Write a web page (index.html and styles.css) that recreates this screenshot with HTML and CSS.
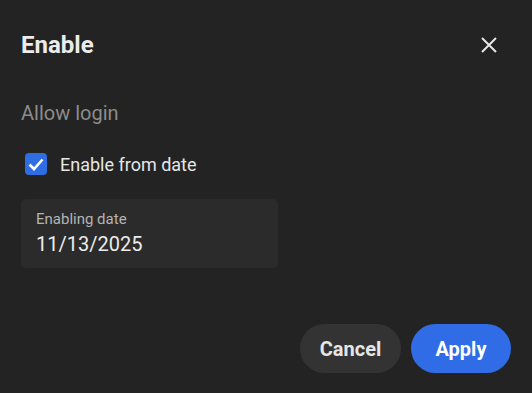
FILE: index.html
```html
<!DOCTYPE html>
<html lang="en">
<head>
    <meta charset="UTF-8">
    <meta name="viewport" content="width=device-width, initial-scale=1.0">
    <title>Enable</title>
    <link rel="stylesheet" href="styles.css">
</head>
<body>
    <div class="dialog">
        <div class="header">
            <h1>Enable</h1>
            <button class="close" aria-label="Close">
                <svg width="16" height="16" viewBox="0 0 16 16"><path d="M1 1 L15 15 M15 1 L1 15" stroke="#e6e6e6" stroke-width="2" fill="none"/></svg>
            </button>
        </div>
        <p class="section">Allow login</p>
        <label class="check">
            <span class="box">
                <svg width="22" height="22" viewBox="0 0 22 22"><path d="M4.5 11.5 L9 16 L17.5 6.5" stroke="#fff" stroke-width="2.6" fill="none"/></svg>
            </span>
            Enable from date
        </label>
        <div class="field">
            <div class="field-label">Enabling date</div>
            <div class="field-value">11/13/2025</div>
        </div>
        <div class="actions">
            <button class="btn cancel">Cancel</button>
            <button class="btn apply">Apply</button>
        </div>
    </div>
</body>
</html>
```

FILE: styles.css
```css
body { margin: 0; background: #232323; font-family: Roboto, "Noto Sans", sans-serif; color: #e6e6e6; }
.dialog { padding: 27px 21px 20px 21px; height: 393px; box-sizing: border-box; display: flex; flex-direction: column; }
.header { display: flex; justify-content: space-between; align-items: center; height: 36px; }
.header h1 { margin: 0; font-size: 24px; font-weight: 700; color: #ececec; }
.close { background: none; border: none; padding: 0; margin-right: 14px; width: 16px; height: 16px; cursor: pointer; display: flex; }
.section { margin: 38px 0 0 0; font-size: 20px; color: #8c8c8c; line-height: 24px; }
.check { display: flex; align-items: center; gap: 13px; margin: 28px 0 0 4px; font-size: 18px; color: #e6e6e6; height: 22px; }
.box { width: 22px; height: 22px; border-radius: 4px; background: #2f6de2; display: flex; }
.field { margin-top: 24px; width: 257px; height: 69px; box-sizing: border-box; background: #2b2b2b; border-radius: 5px; padding: 11px 15px; }
.field-label { font-size: 15px; color: #b4b4b4; line-height: 18px; }
.field-value { font-size: 20px; color: #ececec; margin-top: 4px; line-height: 24px; }
.actions { margin-top: auto; display: flex; justify-content: flex-end; gap: 10px; }
.btn { height: 49px; border: none; border-radius: 25px; font-family: inherit; font-size: 20px; font-weight: 700; cursor: pointer; width: 101px; }
.cancel { background: #333333; color: #e6e6e6; }
.apply { background: #2f6ce5; color: #fff; width: 100px; }
```
